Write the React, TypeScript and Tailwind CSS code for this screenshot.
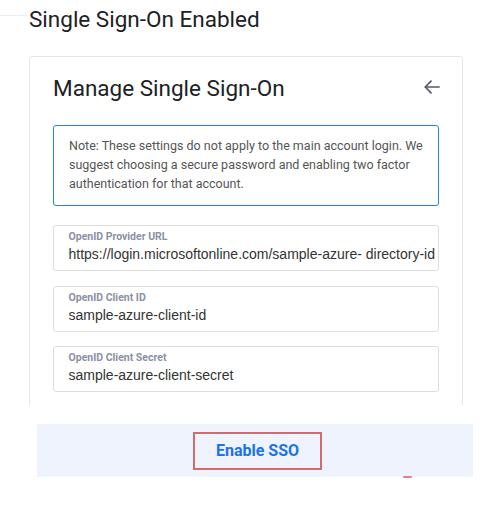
import React from "react";

function ArrowLeft() {
  return (
    <svg width="16" height="14" viewBox="0 0 16 14" fill="none" stroke="#555a60" strokeWidth="1.7" strokeLinecap="round" strokeLinejoin="round">
      <path d="M15 7H1.5" />
      <path d="M7 1.2L1.3 7L7 12.8" />
    </svg>
  );
}

function Field({ label, value }: { label: string; value: string }) {
  return (
    <div className="flex h-[46px] flex-col rounded-[3px] border border-[#dedede] bg-white pl-[14.5px] pt-[5px]">
      <div className="text-[10.5px] font-bold leading-[12px] text-[#8a90a6]">{label}</div>
      <div
        className="mt-[2px] whitespace-nowrap text-[14px] leading-[18px] text-[#333]"
        style={{ fontFamily: "'Liberation Sans', Arial, sans-serif" }}
      >
        {value}
      </div>
    </div>
  );
}

export default function App() {
  return (
    <div
      className="flex h-[522px] w-[500px] flex-col overflow-hidden bg-white"
      style={{ fontFamily: "Roboto, 'Liberation Sans', sans-serif" }}
    >
      <div className="flex items-start">
        <div className="mt-[15px] h-px w-[27px] bg-[#ececec]" />
        <div className="ml-[2px] mt-[5px] text-[22.5px] leading-[28px] text-[#202124]">Single Sign-On Enabled</div>
      </div>

      <div className="ml-[29px] mt-[23px] flex w-[434px] flex-col rounded-t-[4px] border-x border-t border-[#e6e6e6] px-[23px] pb-[13px] pt-[17px]">
        <div className="flex items-start justify-between">
          <div className="text-[22.5px] leading-[28px] text-[#202124]">Manage Single Sign-On</div>
          <div className="mr-[-1px] mt-[6px]">
            <ArrowLeft />
          </div>
        </div>

        <div className="mt-[23px] h-[81px] rounded-[3px] border border-[#2a86d1] px-[15px] pt-[10px] text-[12.5px] leading-[19px] text-[#555]">
          Note: These settings do not apply to the main account login. We suggest choosing a secure password and enabling two factor authentication for that account.
        </div>

        <div className="mt-[19px] flex flex-col gap-[14.5px]">
          <Field label="OpenID Provider URL" value="https://login.microsoftonline.com/sample-azure- directory-id" />
          <Field label="OpenID Client ID" value="sample-azure-client-id" />
          <Field label="OpenID Client Secret" value="sample-azure-client-secret" />
        </div>
      </div>

      <div className="relative ml-[37px] mt-[19px] flex h-[53px] w-[436px] items-center bg-[#eef3fd] pl-[156px]">
        <button className="flex h-[38px] w-[129px] items-center justify-center border-2 border-[#d56a6c] text-[16px] font-bold text-[#1a73e8]">
          Enable SSO
        </button>
        <div className="absolute bottom-[-1px] left-[366px] h-[2px] w-[9px] rounded-full bg-[#e57f86]" />
      </div>
    </div>
  );
}
